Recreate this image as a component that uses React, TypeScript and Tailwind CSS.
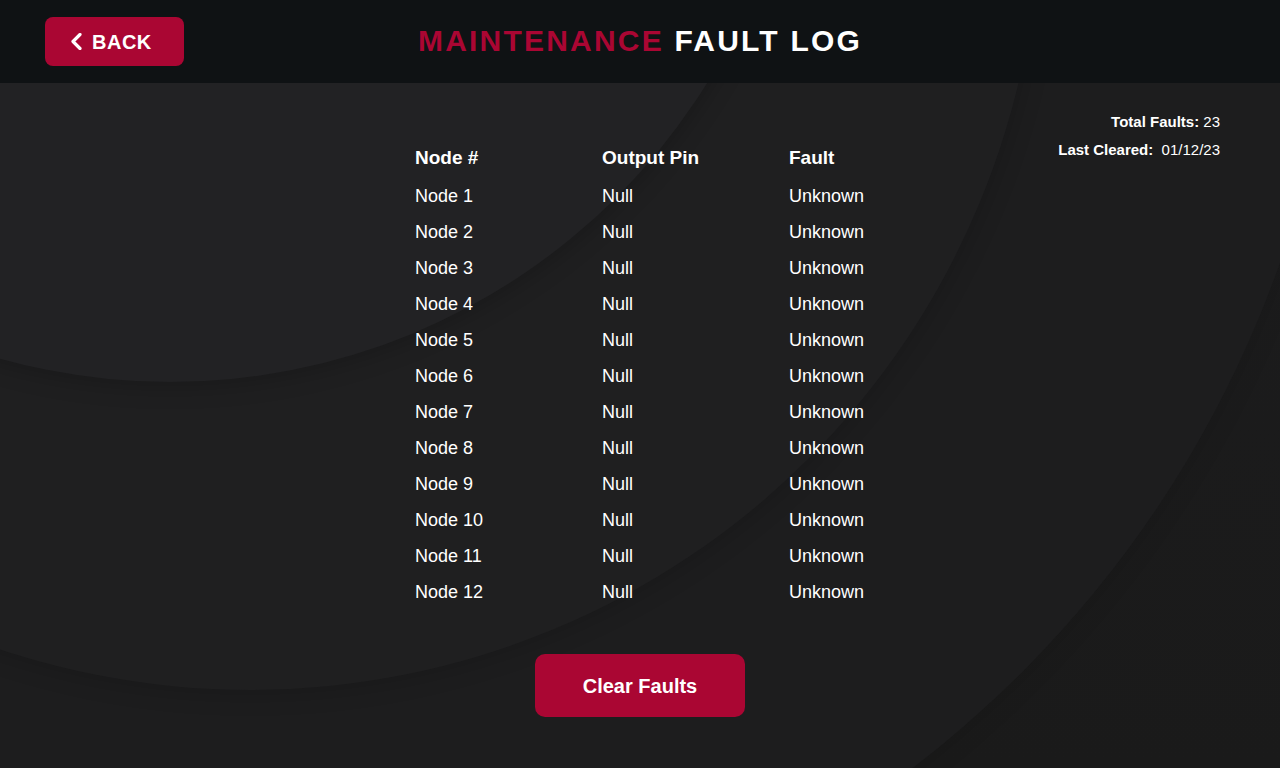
import React from "react";

const rows = Array.from({ length: 12 }, (_, i) => ({
  node: `Node ${i + 1}`,
  pin: "Null",
  fault: "Unknown",
}));

// soft concentric arcs behind the table
const Backdrop = () => (
  <svg
    className="absolute inset-0 h-full w-full"
    viewBox="0 83 1280 685"
    preserveAspectRatio="none"
  >
    <defs>
      <filter id="soft" x="-20%" y="-20%" width="140%" height="140%">
        <feGaussianBlur stdDeviation="12" />
      </filter>
      <linearGradient id="base" x1="0" y1="0" x2="0" y2="1">
        <stop offset="0" stopColor="#1c1c1d" />
        <stop offset="1" stopColor="#1a1a1a" />
      </linearGradient>
    </defs>
    <rect x="0" y="83" width="1280" height="685" fill="url(#base)" />
    <circle cx="250" cy="-100" r="1096" fill="#000" opacity="0.1" filter="url(#soft)" />
    <circle cx="250" cy="-100" r="1092" fill="#1d1d1e" />
    <circle cx="250" cy="-100" r="794" fill="#000" opacity="0.15" filter="url(#soft)" />
    <circle cx="250" cy="-100" r="790" fill="#1f1f20" />
    <circle cx="170" cy="-250" r="636" fill="#000" opacity="0.2" filter="url(#soft)" />
    <circle cx="170" cy="-250" r="632" fill="#222224" />
  </svg>
);

export default function App() {
  return (
    <div
      className="flex h-[768px] w-[1280px] flex-col overflow-hidden bg-[#1d1d1e] text-white"
      style={{ fontFamily: '"Liberation Sans", Arial, sans-serif' }}
    >
      <header className="relative flex h-[83px] items-center bg-[#0f1214] px-[45px]">
        <button className="flex h-[49px] w-[139px] items-center gap-[10px] rounded-[8px] bg-[#aa0633] pl-[25px] text-[20px] font-bold tracking-[0.5px] text-white">
          <svg width="12" height="17" viewBox="0 0 12 17">
            <path
              d="M10 1.5 L3 8.5 L10 15.5"
              fill="none"
              stroke="white"
              strokeWidth="3.2"
              strokeLinecap="round"
              strokeLinejoin="round"
            />
          </svg>
          BACK
        </button>
        <h1 className="absolute left-[418px] top-[18px] text-[30px] font-bold tracking-[2.2px]">
          <span className="text-[#aa0633]">MAINTENANCE</span>{" "}
          <span className="text-white">FAULT LOG</span>
        </h1>
      </header>

      <main className="relative flex-1">
        <Backdrop />
        <div className="relative flex h-full flex-col items-center">
          <div className="absolute right-[60px] top-[28px] flex flex-col items-end gap-[5px] text-[15px]">
            <p>
              <span className="font-bold">Total Faults:</span> 23
            </p>
            <p>
              <span className="font-bold">Last Cleared:</span>&nbsp; 01/12/23
            </p>
          </div>

          <table className="ml-[24px] mt-[61px] border-collapse text-left text-[18px]">
            <thead>
              <tr className="h-[32px]">
                <th className="w-[187px] p-0 align-top text-[19px] font-bold">Node #</th>
                <th className="w-[187px] p-0 align-top text-[19px] font-bold">Output Pin</th>
                <th className="w-[100px] p-0 align-top text-[19px] font-bold">Fault</th>
              </tr>
            </thead>
            <tbody>
              {rows.map((r) => (
                <tr key={r.node} className="h-[36px]">
                  <td className="p-0 pt-[4px] align-middle">{r.node}</td>
                  <td className="p-0 pt-[4px] align-middle">{r.pin}</td>
                  <td className="p-0 pt-[4px] align-middle">{r.fault}</td>
                </tr>
              ))}
            </tbody>
          </table>

          <button className="mt-[46px] h-[63px] w-[210px] rounded-[10px] bg-[#aa0633] text-[20px] font-bold text-white">
            Clear Faults
          </button>
        </div>
      </main>
    </div>
  );
}
